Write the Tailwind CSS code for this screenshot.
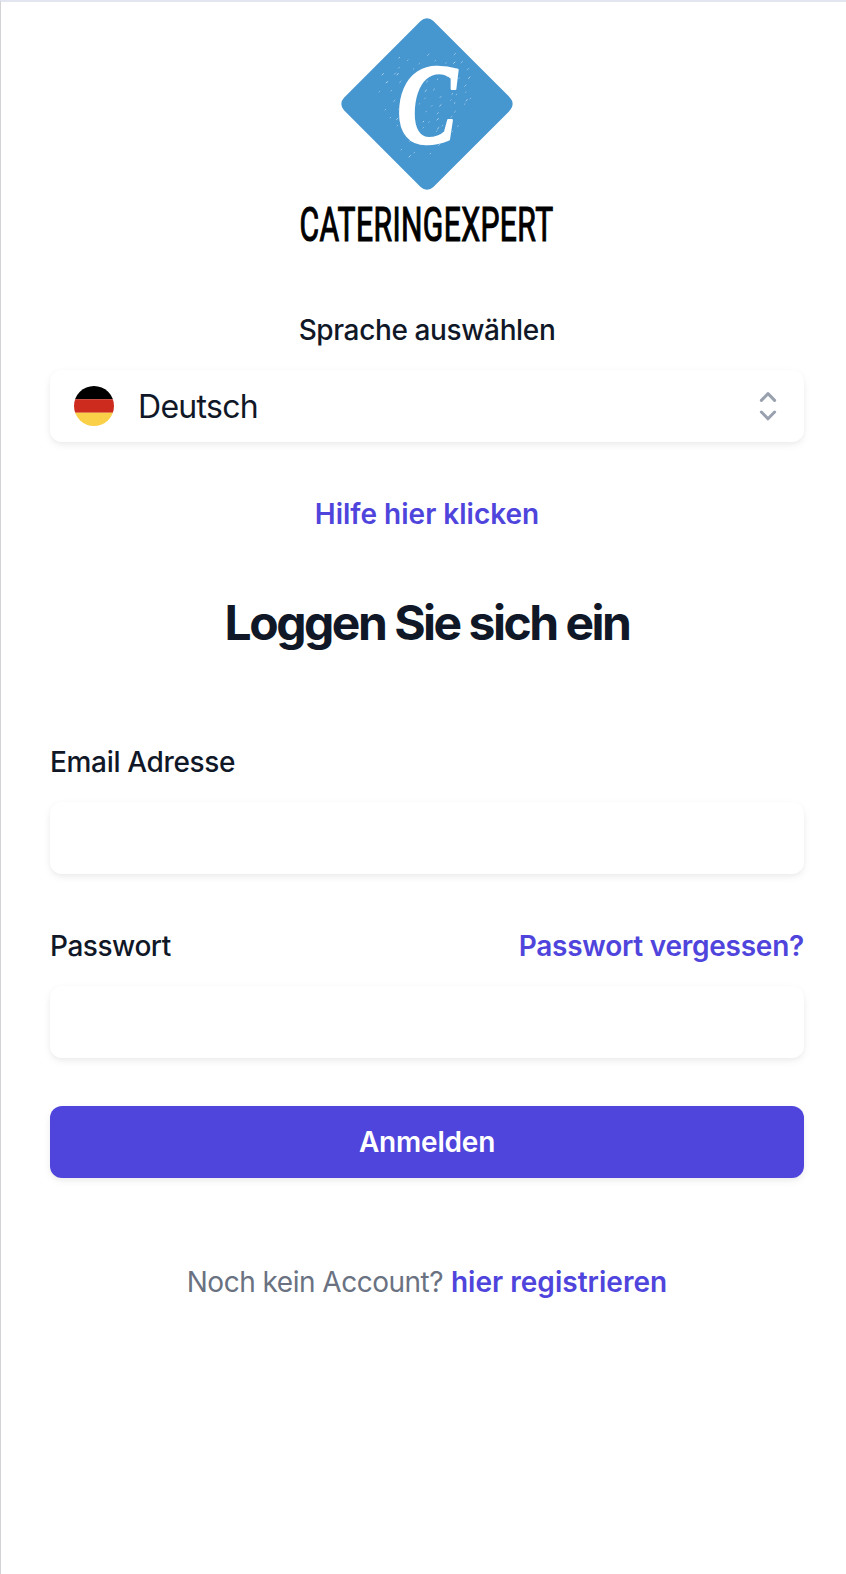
<!DOCTYPE html>
<html lang="de">
<head>
<meta charset="utf-8">
<title>CateringExpert</title>
<script src="https://cdn.jsdelivr.net/npm/@tailwindcss/browser@4"></script>
</head>
<body class="bg-white">
<main class="flex min-h-[1574px] flex-col border-t-2 border-l border-t-[#e3e5f0] border-l-[#d4d4d6] pr-[42px] pl-[49px] font-[Inter,sans-serif] text-[28px] leading-10 font-medium text-gray-900">
  <svg class="mx-auto mt-2 h-[240px] w-[270px] shrink-0 overflow-visible" viewBox="292 10 270 240" role="img" aria-label="CateringExpert">
    <rect x="363.800" y="40.800" width="126.400" height="126.400" rx="9" transform="rotate(45 427 104)" fill="#4696d0"/>
    <text transform="translate(397 142.500) scale(.78 1)" font-family="Liberation Serif, serif" font-size="115" font-style="italic" font-weight="700" fill="#fff" stroke="#fff" stroke-width="2.500" stroke-linejoin="round">C</text>
    <g stroke="#fff" stroke-linecap="round" stroke-dasharray="1 11 2 17 1 7" fill="none">
      <path opacity=".4" d="M386 83l23-24M391 91l38-37M385 110l55-54M390 118l66-65M397 126l72-71M404 134l72-73M401 150l75-75M414 153l59-57M430 154l36-36M379 92l24-29"/>
      <path opacity=".55" stroke-dasharray="2 22 1 15" d="M397 75l7-9M409 157l70-69M455 62l-65 64M470 77l-70 67M382 75l18-18M437 120l29-28"/>
    </g>
    <text transform="translate(299.500 240.700) scale(.62 1)" textLength="409" font-family="Roboto, sans-serif" font-size="48.500" font-weight="400" fill="#000" stroke="#000" stroke-width="1.200">CATERINGEXPERT</text>
  </svg>
  <div class="mt-[60px] text-center tracking-[-.37px]">Sprache auswählen</div>
  <button class="mt-5 flex h-[72px] w-full shrink-0 items-center rounded-xl bg-white px-6 text-[32px] font-normal shadow-[0_2px_4px_rgba(0,0,0,.03),0_3px_8px_rgba(0,0,0,.06)]">
    <svg class="size-10" viewBox="0 0 40 40"><clipPath id="f"><circle cx="20" cy="20" r="20"/></clipPath><g clip-path="url(#f)"><path d="M0 0h40v13.300H0z"/><path fill="#cc2b1d" d="M0 13.300h40v13.400H0z"/><path fill="#f9d048" d="M0 26.700h40V40H0z"/></g></svg>
    <span class="mt-0.5 ml-6 tracking-[-.7px]">Deutsch</span>
    <svg class="-mr-2 ml-auto size-10 text-gray-400" viewBox="0 0 20 20" fill="none" stroke="currentColor" stroke-width="1.500" stroke-linecap="round" stroke-linejoin="round"><path d="M6.700 7.200 10 3.800 13.300 7.200M13.300 13 10 16.400 6.700 13"/></svg>
  </button>
  <div class="mt-[52px] text-center font-semibold text-[#4f45dc]">Hilfe hier klicken</div>
  <h1 class="mt-[53px] text-center text-5xl leading-[72px] font-bold tracking-[-2.5px]">Loggen Sie sich ein</h1>
  <form class="mt-[83px] flex flex-col">
    <label for="e" class="tracking-[-.33px]">Email Adresse</label>
    <input id="e" class="mt-5 h-[72px] rounded-xl bg-white shadow-[0_2px_4px_rgba(0,0,0,.03),0_3px_8px_rgba(0,0,0,.06)]">
    <div class="mt-[52px] flex justify-between"><label for="p" class="tracking-[-.45px]">Passwort</label><a class="font-semibold tracking-[-.25px] text-[#4f45dc]">Passwort vergessen?</a></div>
    <input id="p" type="password" class="mt-5 h-[72px] rounded-xl bg-white shadow-[0_2px_4px_rgba(0,0,0,.03),0_3px_8px_rgba(0,0,0,.06)]">
    <button class="mt-12 h-[72px] rounded-xl bg-[#4f45dc] font-semibold tracking-[-.2px] text-white shadow-[0_2px_4px_rgba(0,0,0,.03),0_3px_8px_rgba(0,0,0,.06)]">Anmelden</button>
  </form>
  <p class="mt-[84px] text-center font-normal text-gray-500"><span class="tracking-[-.5px]">Noch kein Account?</span> <a class="font-semibold tracking-[.03px] text-[#4f45dc]">hier registrieren</a></p>
</main>
</body>
</html>
